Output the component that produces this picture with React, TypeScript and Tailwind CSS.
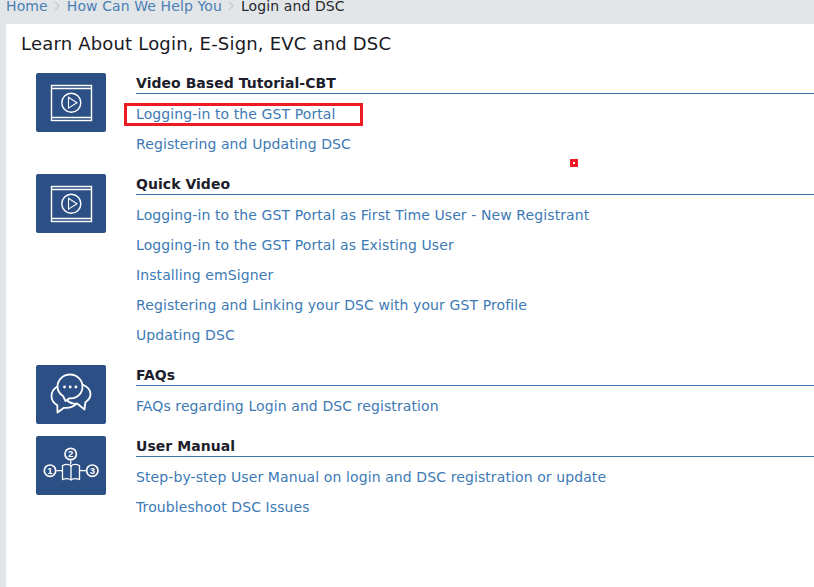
const font = "font-['DejaVu_Sans',Verdana,sans-serif]";

function VideoIcon() {
  return (
    <svg viewBox="0 0 70 59" className="h-full w-full" fill="none" stroke="#fff">
      <rect x="15.5" y="12.5" width="40" height="35" strokeWidth="1.4" />
      <path d="M16 15.5H55M16 44.5H55" strokeWidth="1.4" />
      <circle cx="35.3" cy="29.7" r="9.5" strokeWidth="1.4" />
      <path d="M32.5 24.3V35.1L41 29.7Z" strokeWidth="1.1" />
    </svg>
  );
}

function ChatIcon() {
  return (
    <svg viewBox="0 0 70 59" className="h-full w-full" fill="none" stroke="#fff" strokeWidth="1.8" strokeLinejoin="round">
      <path d="M34 9.5C27 9.5 21.5 15 21.5 21.5C21.5 25.5 23.5 28.8 27 31L29.5 36L33.5 33.2C34 33.3 34.5 33.3 35 33.3C41.5 33.3 46.5 28.2 46.5 21.5C46.5 15 41 9.5 34 9.5Z" />
      <path d="M21.5 21.5C17.8 23.5 15.5 27 15.5 31C15.5 35 17.8 38.2 21.3 40.2L21.5 47.5L28 42.8C33.5 43.4 38.5 41 41.5 37.8" />
      <path d="M46.5 19.5C51 21.5 54.5 25 54.5 29C54.5 32.3 52.5 35.2 49.4 37.2L48.5 44.5L41.5 38.8C37.5 39 33.8 38 31.2 35.5" />
      <circle cx="28.5" cy="22" r="1.4" fill="#fff" stroke="none" />
      <circle cx="34.2" cy="22" r="1.4" fill="#fff" stroke="none" />
      <circle cx="39.9" cy="22" r="1.4" fill="#fff" stroke="none" />
    </svg>
  );
}

function BookIcon() {
  return (
    <svg viewBox="0 0 70 59" className="h-full w-full" fill="none" stroke="#fff">
      <path d="M26.5 29.5C30 28 33 28 35 30C37 28 40 28 43.5 29.5V43.5C40 42.3 37 42.3 35 44C33 42.3 30 42.3 26.5 43.5Z" strokeWidth="1.3" />
      <path d="M35 30V44M34.7 24.5V28.5M20.5 34.7H26M44 34.7H50" strokeWidth="1.3" />
      {[
        [14, 34.7, "1"],
        [34.7, 18, "2"],
        [56.3, 34.7, "3"],
      ].map(([cx, cy, n]) => (
        <g key={n as string}>
          <circle cx={cx as number} cy={cy as number} r="5.7" stroke="#fff" strokeWidth="1.7" />
          <text
            x={cx as number}
            y={(cy as number) + 3.3}
            textAnchor="middle"
            fontSize="9.5"
            fontWeight="700"
            fill="#fff"
            stroke="none"
            fontFamily="'Liberation Sans', sans-serif"
          >
            {n}
          </text>
        </g>
      ))}
    </svg>
  );
}

function Chevron() {
  return (
    <svg viewBox="0 0 6 10" className="mr-[7px] ml-[6px] h-[10px] w-[6px]" fill="none" stroke="#c9cdd1" strokeWidth="1.5">
      <path d="M1 1L5 5L1 9" />
    </svg>
  );
}

const sections = [
  {
    title: "Video Based Tutorial-CBT",
    icon: <VideoIcon />,
    links: ["Logging-in to the GST Portal", "Registering and Updating DSC"],
  },
  {
    title: "Quick Video",
    icon: <VideoIcon />,
    links: [
      "Logging-in to the GST Portal as First Time User - New Registrant",
      "Logging-in to the GST Portal as Existing User",
      "Installing emSigner",
      "Registering and Linking your DSC with your GST Profile",
      "Updating DSC",
    ],
  },
  {
    title: "FAQs",
    icon: <ChatIcon />,
    links: ["FAQs regarding Login and DSC registration"],
  },
  {
    title: "User Manual",
    icon: <BookIcon />,
    links: ["Step-by-step User Manual on login and DSC registration or update", "Troubleshoot DSC Issues"],
  },
];

export default function App() {
  return (
    <div className={`${font} relative h-[587px] w-[814px] overflow-hidden bg-[#e3e6e9] text-[14px]`}>
      {/* breadcrumb is scrolled slightly off the top in the capture */}
      <div className="flex h-[24px] items-center pb-[12px] pl-[6px] leading-[12px] tracking-[0.1px]">
        <a className="text-[#4a7fb5]">Home</a>
        <Chevron />
        <a className="text-[#4a7fb5]">How Can We Help You</a>
        <Chevron />
        <span className="text-[#26262b]">Login and DSC</span>
      </div>

      <div className="ml-[6px] h-[563px] bg-white pl-[15px]">
        <h1 className="flex h-[49px] items-center pb-[11px] text-[18px] font-normal tracking-[0.19px] text-[#1a1a1f]">
          Learn About Login, E-Sign, EVC and DSC
        </h1>
        <div className="flex flex-col gap-[15px] pl-[15px]">
          {sections.map((s) => (
            <div key={s.title} className="flex items-start gap-[30px]">
              {/* icon may overhang a short row (FAQs) */}
              <div className="-mb-[3px] h-[59px] w-[70px] shrink-0 rounded-[2px] bg-[#2c5085]">{s.icon}</div>
              <div className="min-w-0 flex-1">
                <div className="h-[21px] border-b border-[#3a76ac] text-[14px] leading-[20px] font-bold tracking-[0.04px] text-[#1d1d2b]">
                  {s.title}
                </div>
                <ul className="mt-[5px] tracking-[0.1px]">
                  {s.links.map((l) => (
                    <li key={l} className="h-[30px] leading-[30px] text-[#3d7ab5]">
                      {l}
                    </li>
                  ))}
                </ul>
              </div>
            </div>
          ))}
        </div>
      </div>

      {/* annotations drawn over the screenshot */}
      <div className="absolute top-[103px] left-[124px] h-[23px] w-[239px] border-[3px] border-[#ed1c24]" />
      <div className="absolute top-[159px] left-[570px] h-[8px] w-[8px] border-[3px] border-[#ed1c24] bg-white" />
    </div>
  );
}
